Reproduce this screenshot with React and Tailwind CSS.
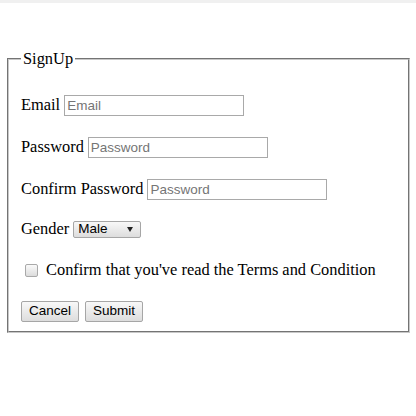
import React from 'react';

const serif = "font-['Liberation_Serif','Times_New_Roman',serif]";
const sans = "font-['Liberation_Sans',Arial,sans-serif]";

const Field = ({ label, placeholder, type = 'text', className = '' }) => (
  <div className={`flex items-center h-[22px] ${className}`}>
    <label className={`${serif} text-[16.4px] leading-none text-black mr-[4px]`}>{label}</label>
    <input
      type={type}
      placeholder={placeholder}
      className={`${sans} w-[180px] h-[21px] border border-[#a9a9a9] px-[2px] text-[13.5px] text-black placeholder:text-[#757575] bg-white outline-none`}
    />
  </div>
);

const Button = ({ children }) => (
  <button
    className={`${sans} h-[21px] px-[7px] text-[13.5px] text-black border border-[#a6a6a6] rounded-[2px] bg-gradient-to-b from-[#f8f8f8] to-[#dddddd] leading-none`}
  >
    {children}
  </button>
);

export default function App() {
  return (
    <div className="w-[416px] h-[416px] bg-white">
      {/* thin grey strip at top */}
      <div className="h-[3px] bg-[#f0f0f0]" />

      <form className="pl-[7px] pt-[47px]">
        <fieldset className="w-[403px] min-w-0 border-2 [border-style:groove] border-[#c8c8c8] px-[12px] pb-[9px] pt-[0px]">
          <legend className={`${serif} text-[16.4px] px-[2px] text-black leading-[18px]`}>SignUp</legend>

          <div className="flex flex-col">
            <Field label="Email" placeholder="Email" className="mt-[26px]" />
            <Field label="Password" placeholder="Password" type="password" className="mt-[20px]" />
            <Field label="Confirm Password" placeholder="Password" type="password" className="mt-[20px]" />

            <div className="flex items-center h-[22px] mt-[18px]">
              <label className={`${serif} text-[16.4px] leading-none text-black mr-[4px]`}>Gender</label>
              <div
                className={`${sans} w-[68px] h-[17px] flex items-center justify-between border border-[#a6a6a6] rounded-[2px] bg-gradient-to-b from-[#f8f8f8] to-[#dddddd] pl-[4px] pr-[7px] text-[13.5px] text-black leading-none`}
              >
                <span>Male</span>
                <svg width="6" height="5" viewBox="0 0 6 5">
                  <path d="M0 0 L6 0 L3 5 Z" fill="#222" />
                </svg>
              </div>
            </div>

            <div className="flex items-center h-[22px] mt-[19px]">
              <span className="ml-[4px] mr-[8px] w-[13px] h-[13px] rounded-[2px] border border-[#a9a9a9] bg-gradient-to-b from-[#fafafa] to-[#dcdcdc]" />
              <span className={`${serif} text-[16.4px] leading-none text-black`}>
                Confirm that you've read the Terms and Condition
              </span>
            </div>

            <div className="flex items-center gap-[6px] h-[22px] mt-[19px]">
              <Button>Cancel</Button>
              <Button>Submit</Button>
            </div>
          </div>
        </fieldset>
      </form>
    </div>
  );
}
